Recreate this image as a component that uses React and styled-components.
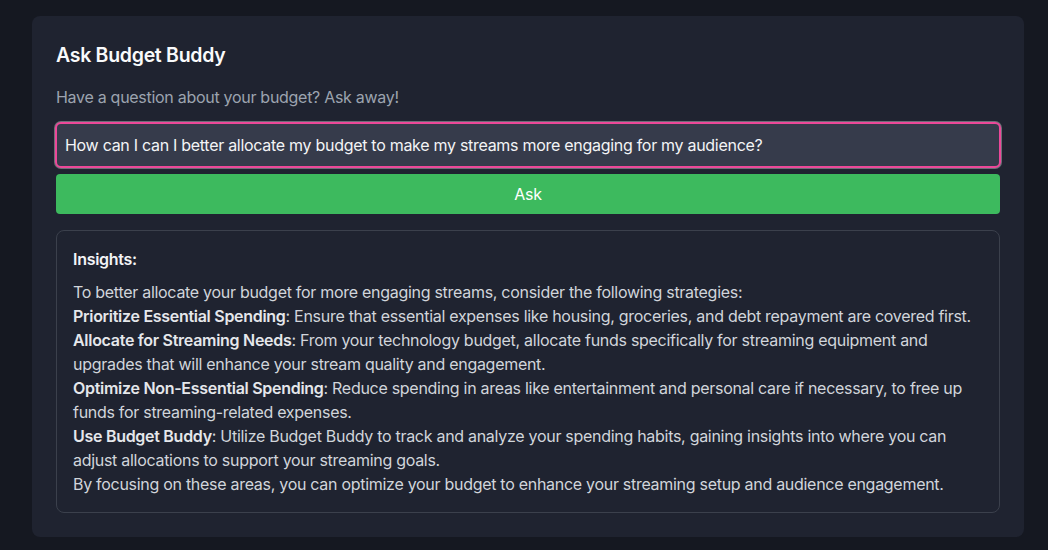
import styled, { createGlobalStyle } from 'styled-components';

const GlobalStyle = createGlobalStyle`
    body {
        margin: 0;
        background-color: #151821;
        font-family: Inter, "Noto Sans", sans-serif;
        letter-spacing: -0.018em;
    }
`

const items = [
    { title: 'Prioritize Essential Spending', text: 'Ensure that essential expenses like housing, groceries, and debt repayment are covered first.' },
    { title: 'Allocate for Streaming Needs', text: 'From your technology budget, allocate funds specifically for streaming equipment and upgrades that will enhance your stream quality and engagement.' },
    { title: 'Optimize Non-Essential Spending', text: 'Reduce spending in areas like entertainment and personal care if necessary, to free up funds for streaming-related expenses.' },
    { title: 'Use Budget Buddy', text: 'Utilize Budget Buddy to track and analyze your spending habits, gaining insights into where you can adjust allocations to support your streaming goals.' },
]

const App = () => {
    return (<>
        <GlobalStyle />
        <Page>
            <Card>
                <Title>Ask Budget Buddy</Title>
                <Subtitle>Have a question about your budget? Ask away!</Subtitle>
                <Input
                    type='text'
                    defaultValue='How can I can I better allocate my budget to make my streams more engaging for my audience?'
                />
                <AskButton>Ask</AskButton>
                <Insights>
                    <InsightsHead>Insights:</InsightsHead>
                    <Body>
                        <Line>To better allocate your budget for more engaging streams, consider the following strategies:</Line>
                        {items.map((item) => (
                            <Line key={item.title}><strong>{item.title}</strong>: {item.text}</Line>
                        ))}
                        <Line>By focusing on these areas, you can optimize your budget to enhance your streaming setup and audience engagement.</Line>
                    </Body>
                </Insights>
            </Card>
        </Page>
    </>)
}

const Page = styled.div`
    padding: 16px 24px 0 32px;
`

const Card = styled.div`
    background-color: #1f2330;
    border-radius: 8px;
    padding: 24px;
    display: flex;
    flex-direction: column;
`

const Title = styled.h2`
    margin: 1px 0 0;
    font-size: 19.5px;
    line-height: 28px;
    font-weight: 600;
    color: #f9fafb;
`

const Subtitle = styled.p`
    margin: 16px 0 13px;
    font-size: 16px;
    line-height: 24px;
    color: #9ca3af;
`

const Input = styled.input`
    box-sizing: border-box;
    width: calc(100% + 2px);
    margin: 0 -1px;
    height: 46px;
    padding: 0 8px;
    font-family: inherit;
    letter-spacing: inherit;
    font-size: 16px;
    color: #f3f4f6;
    background-color: #363b4b;
    border: 2px solid #ec4899;
    border-radius: 6px;
    box-shadow: 0 0 0 1px rgba(255, 255, 255, 0.35);
    outline: none;
`

const AskButton = styled.button`
    margin-top: 6px;
    height: 40px;
    border: none;
    border-radius: 4px;
    background-color: #3dba5e;
    color: #fff;
    font-family: inherit;
    letter-spacing: inherit;
    font-size: 16px;
`

const Insights = styled.div`
    margin-top: 16px;
    border: 1px solid #3b404c;
    border-radius: 8px;
    padding: 16px;
`

const InsightsHead = styled.div`
    font-size: 16px;
    line-height: 24px;
    font-weight: 600;
    color: #f3f4f6;
`

const Body = styled.div`
    margin-top: 9px;
    font-size: 16px;
    line-height: 24px;
    color: #d1d5db;
    strong {
        font-weight: 600;
        color: #e5e7eb;
    }
`

const Line = styled.div``

export default App;
